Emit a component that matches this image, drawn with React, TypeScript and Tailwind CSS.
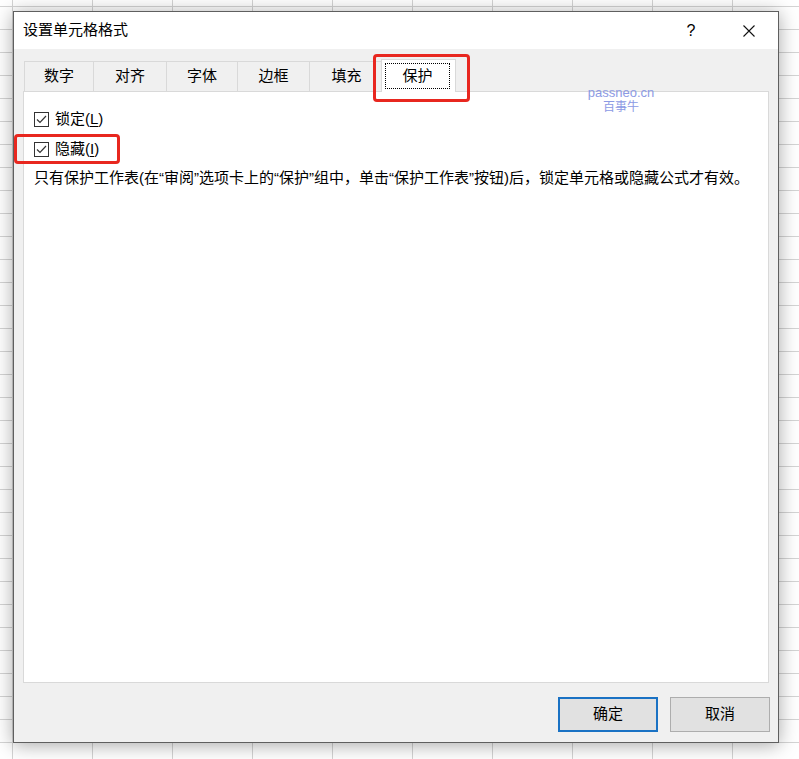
import React from "react";

const font = "font-['Liberation_Sans','Noto_Sans_CJK_SC',sans-serif]";

function Check() {
  return (
    <div className="w-[15px] h-[15px] border border-[#333] bg-white flex items-center justify-center shrink-0">
      <svg width="13" height="13" viewBox="0 0 13 13">
        <polyline points="2,6.5 5,9.5 11,3" fill="none" stroke="#333" strokeWidth="1.2" />
      </svg>
    </div>
  );
}

function Tab({ label, w }: { label: string; w: number }) {
  return (
    <div
      className="h-[30px] border-t border-l border-[#d9d9d9] bg-[#f0f0f0] flex items-center justify-center text-[15px] text-black"
      style={{ width: w }}
    >
      {label}
    </div>
  );
}

export default function App() {
  return (
    <div
      className={`${font} relative w-[799px] h-[759px] overflow-hidden bg-white bg-[linear-gradient(to_right,#d4d4d4_1px,transparent_1px),linear-gradient(to_bottom,#d4d4d4_1px,transparent_1px)] bg-[size:80px_23px] bg-[position:12px_6px] pl-[13px] pt-[11px]`}
    >
      <div className="w-[766px] h-[732px] border border-[#5f5f5f] bg-[#f0f0f0] shadow-[0_2px_18px_rgba(0,0,0,0.35)] flex flex-col">
        {/* Title bar */}
        <div className="h-[37px] bg-white flex items-center pl-[9px] shrink-0">
          <span className="text-[15px] text-black">设置单元格格式</span>
          <div className="flex-1" />
          <span className="w-[20px] text-center text-[16px] text-black">?</span>
          <div className="w-[12px] h-[12px] ml-[42px] mr-[23px]">
            <svg width="12" height="12" viewBox="0 0 12 12">
              <path d="M0.5 0.5 L11.5 11.5 M11.5 0.5 L0.5 11.5" stroke="#111" strokeWidth="1.1" />
            </svg>
          </div>
        </div>

        {/* Tabs */}
        <div className="mt-[10px] pl-[10px] flex items-end shrink-0">
          <Tab label="数字" w={69} />
          <Tab label="对齐" w={73} />
          <Tab label="字体" w={71} />
          <Tab label="边框" w={72} />
          <div className="h-[30px] w-[74px] border-t border-l border-[#d9d9d9] bg-[#f0f0f0] flex items-center justify-center text-[15px] text-black">
            填充
          </div>
          <div className="relative z-10 -mb-px -ml-[2px] h-[33px] w-[75px] border-t border-l border-r border-[#d9d9d9] bg-white flex pt-[3px] pl-[3px] pr-[5px] pb-[3px]">
            <div className="flex-1 border border-dotted border-black flex items-center justify-center text-[15px] text-black">
              保护
            </div>
          </div>
        </div>

        {/* Panel */}
        <div className="mx-[9px] h-[592px] border border-[#d9d9d9] bg-white pl-[10px] pt-[12px] shrink-0">
          <div className="h-[30px] flex items-center gap-[6px] text-[15px] text-black">
            <Check />
            <span>
              锁定(<span className="underline underline-offset-2">L</span>)
            </span>
          </div>
          <div className="h-[30px] flex items-center gap-[6px] text-[15px] text-black">
            <Check />
            <span>
              隐藏(<span className="underline underline-offset-2">I</span>)
            </span>
          </div>
          <div className="mt-[4px] leading-[20px] text-[15px] text-black whitespace-nowrap">
            只有保护工作表(在“审阅”选项卡上的“保护”组中，单击“保护工作表”按钮)后，锁定单元格或隐藏公式才有效。
          </div>
        </div>

        {/* Buttons */}
        <div className="mt-[14px] flex justify-end gap-[12px] pr-[8px] shrink-0">
          <button className="w-[100px] h-[35px] border-2 border-[#1a72c4] bg-[#e1e1e1] text-[15px] text-black">
            确定
          </button>
          <button className="w-[100px] h-[35px] border border-[#adadad] bg-[#e1e1e1] text-[15px] text-black">
            取消
          </button>
        </div>
      </div>

      {/* Watermark */}
      <div className="absolute left-[586px] top-[86px] w-[70px] flex flex-col items-center leading-none text-[#8c9ae4]">
        <span className="text-[13px] font-['Liberation_Sans',sans-serif]">passneo.cn</span>
        <span className="text-[12px] mt-[2px]">百事牛</span>
      </div>

      {/* Red annotation boxes */}
      <div className="absolute left-[373px] top-[54px] w-[97px] h-[48px] border-[3px] border-[#e8271f] rounded-[4px]" />
      <div className="absolute left-[14px] top-[134px] w-[106px] h-[30px] border-[3px] border-[#e8271f] rounded-[4px]" />
    </div>
  );
}
